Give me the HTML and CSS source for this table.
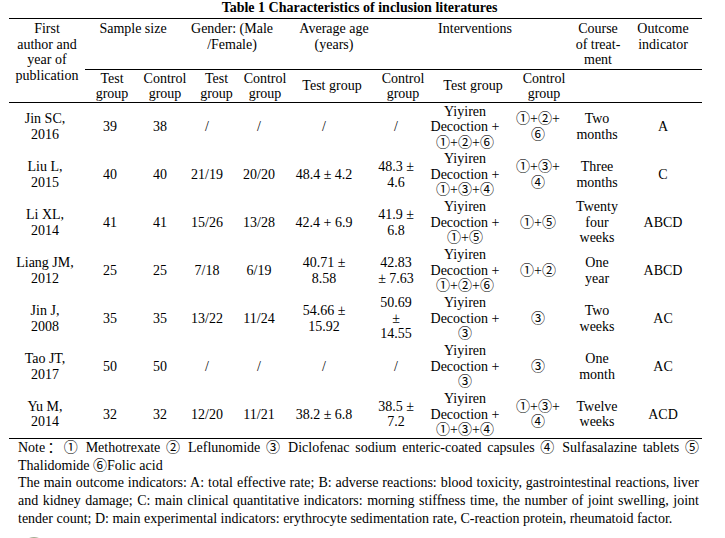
FILE: index.html
```html
<!DOCTYPE html>
<html lang="en">
<head>
    <meta charset="UTF-8">
    <meta name="viewport" content="width=device-width, initial-scale=1.0">
    <title>Table 1 Characteristics of inclusion literatures</title>
    <link rel="stylesheet" href="styles.css">
</head>
<body>
    <div class="page">
        <h1 class="caption">Table 1 Characteristics of inclusion literatures</h1>
        <table class="lit-table">
            <colgroup>
                <col style="width: 76px">
                <col style="width: 54px">
                <col style="width: 52px">
                <col style="width: 51px">
                <col style="width: 46px">
                <col style="width: 88px">
                <col style="width: 54px">
                <col style="width: 86px">
                <col style="width: 56px">
                <col style="width: 52px">
                <col style="width: 78px">
            </colgroup>
            <thead>
                <tr class="main">
                    <th rowspan="2" class="author">First<br>author and<br>year of<br>publication</th>
                    <th colspan="2" class="h-sample">Sample size</th>
                    <th colspan="2" class="h-gender">Gender: (Male<br>/Female)</th>
                    <th colspan="2" class="h-age">Average age<br>(years)</th>
                    <th colspan="2" class="h-inter">Interventions</th>
                    <th>Course<br>of treat-<br>ment</th>
                    <th>Outcome<br>indicator</th>
                </tr>
                <tr class="sub">
                    <th>Test<br>group</th>
                    <th>Control<br>group</th>
                    <th>Test<br>group</th>
                    <th>Control<br>group</th>
                    <th>Test group</th>
                    <th>Control<br>group</th>
                    <th>Test group</th>
                    <th>Control<br>group</th>
                    <th></th>
                    <th></th>
                </tr>
            </thead>
            <tbody>
                <tr>
                    <td>Jin SC,<br>2016</td>
                    <td>39</td>
                    <td>38</td>
                    <td>/</td>
                    <td>/</td>
                    <td>/</td>
                    <td>/</td>
                    <td>Yiyiren<br>Decoction +<br>①+②+⑥</td>
                    <td>①+②+<br>⑥</td>
                    <td>Two<br>months</td>
                    <td>A</td>
                </tr>
                <tr>
                    <td>Liu L,<br>2015</td>
                    <td>40</td>
                    <td>40</td>
                    <td>21/19</td>
                    <td>20/20</td>
                    <td>48.4 ± 4.2</td>
                    <td>48.3 ±<br>4.6</td>
                    <td>Yiyiren<br>Decoction +<br>①+③+④</td>
                    <td>①+③+<br>④</td>
                    <td>Three<br>months</td>
                    <td>C</td>
                </tr>
                <tr>
                    <td>Li XL,<br>2014</td>
                    <td>41</td>
                    <td>41</td>
                    <td>15/26</td>
                    <td>13/28</td>
                    <td>42.4 + 6.9</td>
                    <td>41.9 ±<br>6.8</td>
                    <td>Yiyiren<br>Decoction +<br>①+⑤</td>
                    <td>①+⑤</td>
                    <td>Twenty<br>four<br>weeks</td>
                    <td>ABCD</td>
                </tr>
                <tr>
                    <td>Liang JM,<br>2012</td>
                    <td>25</td>
                    <td>25</td>
                    <td>7/18</td>
                    <td>6/19</td>
                    <td>40.71 ±<br>8.58</td>
                    <td>42.83<br>± 7.63</td>
                    <td>Yiyiren<br>Decoction +<br>①+②+⑥</td>
                    <td>①+②</td>
                    <td>One<br>year</td>
                    <td>ABCD</td>
                </tr>
                <tr>
                    <td>Jin J,<br>2008</td>
                    <td>35</td>
                    <td>35</td>
                    <td>13/22</td>
                    <td>11/24</td>
                    <td>54.66 ±<br>15.92</td>
                    <td>50.69<br>±<br>14.55</td>
                    <td>Yiyiren<br>Decoction +<br>③</td>
                    <td>③</td>
                    <td>Two<br>weeks</td>
                    <td>AC</td>
                </tr>
                <tr>
                    <td>Tao JT,<br>2017</td>
                    <td>50</td>
                    <td>50</td>
                    <td>/</td>
                    <td>/</td>
                    <td>/</td>
                    <td>/</td>
                    <td>Yiyiren<br>Decoction +<br>③</td>
                    <td>③</td>
                    <td>One<br>month</td>
                    <td>AC</td>
                </tr>
                <tr>
                    <td>Yu M,<br>2014</td>
                    <td>32</td>
                    <td>32</td>
                    <td>12/20</td>
                    <td>11/21</td>
                    <td>38.2 ± 6.8</td>
                    <td>38.5 ±<br>7.2</td>
                    <td>Yiyiren<br>Decoction +<br>①+③+④</td>
                    <td>①+③+<br>④</td>
                    <td>Twelve<br>weeks</td>
                    <td>ACD</td>
                </tr>
            </tbody>
        </table>
        <div class="notes">
            <p class="just">Note：① Methotrexate ② Leflunomide ③ Diclofenac sodium enteric-coated capsules ④ Sulfasalazine tablets ⑤</p>
            <p>Thalidomide ⑥Folic acid</p>
            <p class="just">The main outcome indicators: A: total effective rate; B: adverse reactions: blood toxicity, gastrointestinal reactions, liver</p>
            <p class="just">and kidney damage; C: main clinical quantitative indicators: morning stiffness time, the number of joint swelling, joint</p>
            <p>tender count; D: main experimental indicators: erythrocyte sedimentation rate, C-reaction protein, rheumatoid factor.</p>
        </div>
        <div class="badge"></div>
    </div>
</body>
</html>
```

FILE: styles.css
```css
body {
  margin: 0;
  background: #fff;
  color: #000;
  font-family: "Liberation Serif", "Noto Sans CJK SC", serif;
}

.page {
  width: 693px;
  margin-left: 9px;
}

.caption {
  margin: 0 0 2px;
  padding-left: 8px;
  font-size: 14px;
  line-height: 16px;
  font-weight: bold;
  text-align: center;
}

.lit-table {
  width: 693px;
  table-layout: fixed;
  border-collapse: collapse;
  font-size: 14px;
  line-height: 15.5px;
}

.lit-table th,
.lit-table td {
  padding: 0;
  font-weight: normal;
  text-align: center;
  white-space: nowrap;
}

/* header */
.lit-table thead {
  border-top: 1px solid #000;
  border-bottom: 1px solid #000;
}

.main th {
  height: 48px;
  padding-top: 2px;
  vertical-align: top;
  border-bottom: 1px solid #000;
}

.main .author {
  border-bottom: none;
}

.h-sample { padding-right: 10px !important; }
.h-gender { padding-right: 15px !important; }
.h-age { padding-right: 50px !important; }
.h-inter { padding-right: 52px !important; }

.sub th {
  height: 32px;
  vertical-align: middle;
}

/* body rows */
.lit-table tbody tr {
  height: 48px;
}

.lit-table td {
  vertical-align: middle;
}

.lit-table tbody tr:last-child {
  border-bottom: 1px solid #000;
}

.lit-table td:nth-child(1) { padding-right: 4px; }
.lit-table td:nth-child(2) { padding-right: 4px; }
.lit-table td:nth-child(3) { padding-right: 10px; }
.lit-table td:nth-child(4) { padding-right: 19px; }
.lit-table td:nth-child(5) { padding-right: 12px; }
.lit-table td:nth-child(6) { padding-right: 16px; }
.lit-table td:nth-child(7) { padding-right: 14px; }
.lit-table td:nth-child(8) { padding-right: 16px; }
.lit-table td:nth-child(9) { padding-right: 12px; }
.lit-table td:nth-child(10) { padding-right: 2px; }

/* notes under the table */
.notes {
  padding: 0 3px 0 9px;
  font-size: 14px;
  line-height: 17.7px;
}

.notes p {
  margin: 0;
  white-space: nowrap;
}

.notes .just {
  text-align: justify;
  text-align-last: justify;
}

.badge {
  width: 22px;
  height: 22px;
  margin: 9px 0 0 14px;
  border-radius: 50%;
  background: #a4ad92;
}
```
